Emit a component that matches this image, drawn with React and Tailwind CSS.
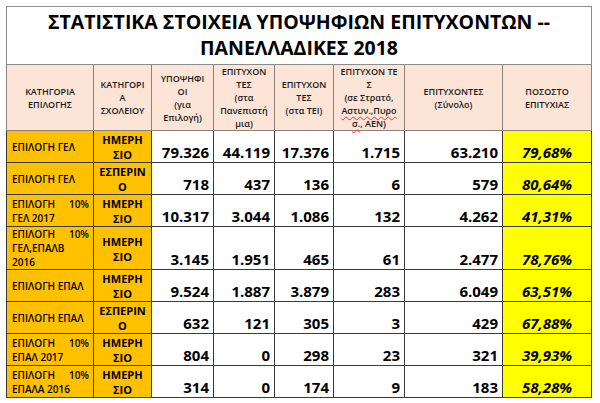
import React from "react";

const font = { fontFamily: '"Open Sans", "Noto Sans", sans-serif' };

const rows = [
  { c1: "ΕΠΙΛΟΓΗ ΓΕΛ", t: ["ΗΜΕΡΗ", "ΣΙΟ"], v: ["79.326", "44.119", "17.376", "1.715", "63.210"], p: "79,68%", h: "h-[32px]" },
  { c1: "ΕΠΙΛΟΓΗ ΓΕΛ", t: ["ΕΣΠΕΡΙΝ", "Ο"], v: ["718", "437", "136", "6", "579"], p: "80,64%", h: "h-[32px]" },
  { m: ["ΓΕΛ 2017"], t: ["ΗΜΕΡΗ", "ΣΙΟ"], v: ["10.317", "3.044", "1.086", "132", "4.262"], p: "41,31%", h: "h-[32px]" },
  { m: ["ΓΕΛ,ΕΠΑΛΒ", "2016"], t: ["ΗΜΕΡΗ", "ΣΙΟ"], v: ["3.145", "1.951", "465", "61", "2.477"], p: "78,76%", h: "h-[42px]", tall: true },
  { c1: "ΕΠΙΛΟΓΗ ΕΠΑΛ", t: ["ΗΜΕΡΗ", "ΣΙΟ"], v: ["9.524", "1.887", "3.879", "283", "6.049"], p: "63,51%", h: "h-[32px]" },
  { c1: "ΕΠΙΛΟΓΗ ΕΠΑΛ", t: ["ΕΣΠΕΡΙΝ", "Ο"], v: ["632", "121", "305", "3", "429"], p: "67,88%", h: "h-[30px]" },
  { m: ["ΕΠΑΛ 2017"], t: ["ΗΜΕΡΗ", "ΣΙΟ"], v: ["804", "0", "298", "23", "321"], p: "39,93%", h: "h-[32px]" },
  { m: ["ΕΠΑΛΑ 2016"], t: ["ΗΜΕΡΗ", "ΣΙΟ"], v: ["314", "0", "174", "9", "183"], p: "58,28%", h: "h-[31px]" },
];

const Squig = ({ children }) => (
  <span className="underline decoration-wavy decoration-red-500 decoration-1 underline-offset-2">{children}</span>
);

const headers = [
  ["ΚΑΤΗΓΟΡΙΑ", "ΕΠΙΛΟΓΗΣ"],
  ["ΚΑΤΗΓΟΡΙ", "Α", "ΣΧΟΛΕΙΟΥ"],
  ["ΥΠΟΨΗΦΙ", "ΟΙ", "(για", "Επιλογή)"],
  ["ΕΠΙΤΥΧΟΝ", "ΤΕΣ", "(στα", "Πανεπιστή", "μια)"],
  ["ΕΠΙΤΥΧΟΝ", "ΤΕΣ", "(στα ΤΕΙ)"],
  ["ΕΠΙΤΥΧΟΝ ΤΕ", "Σ", "(σε Στρατό,", <Squig key="a">Αστυν.,Πυρο</Squig>, <span key="b"><Squig>σ.</Squig>, ΑΕΝ)</span>],
  ["ΕΠΙΤΥΧΟΝΤΕΣ", "(Σύνολο)"],
  ["ΠΟΣΟΣΤΟ", "ΕΠΙΤΥΧΙΑΣ"],
];

export default function App() {
  return (
    <div className="w-[600px] h-[403px] bg-white pt-[6px] pl-[6px]" style={font}>
      <table className="border-collapse table-fixed w-[585px] text-black">
        <colgroup>
          <col className="w-[87px]" />
          <col className="w-[58px]" />
          <col className="w-[62px]" />
          <col className="w-[61px]" />
          <col className="w-[59px]" />
          <col className="w-[71px]" />
          <col className="w-[98px]" />
          <col className="w-[89px]" />
        </colgroup>
        <tbody>
          <tr className="h-[58px]">
            <td colSpan={8} className="border border-[#8c8c8c] text-center align-middle font-bold text-[19.5px] leading-[26px] pb-[2px]">
              ΣΤΑΤΙΣΤΙΚΑ ΣΤΟΙΧΕΙΑ ΥΠΟΨΗΦΙΩΝ ΕΠΙΤΥΧΟΝΤΩΝ --
              <br />
              ΠΑΝΕΛΛΑΔΙΚΕΣ 2018
            </td>
          </tr>
          <tr className="h-[66px] bg-[#fce4d6]">
            {headers.map((lines, i) => (
              <td key={i} className="border border-[#8e8278] text-center align-middle font-semibold text-[9px] leading-[13px] text-[#1a1a1a] px-[1px]">
                {lines.map((l, j) => (
                  <div key={j} className="whitespace-nowrap">{l}</div>
                ))}
              </td>
            ))}
          </tr>
          {rows.map((r, i) => (
            <tr key={i} className={r.h}>
              <td className={`border border-[#3a3a3a] bg-[#ffc000] font-semibold text-[10px] leading-[14px] pl-[5px] pr-[4px] ${r.m ? (r.tall ? "align-top pt-0" : "align-top pt-[2px]") : "align-middle"}`}>
                {r.m ? (
                  <>
                    <div className="flex justify-between">
                      <span>ΕΠΙΛΟΓΗ</span>
                      <span>10%</span>
                    </div>
                    {r.m.map((l, j) => (
                      <div key={j}>{l}</div>
                    ))}
                  </>
                ) : (
                  r.c1
                )}
              </td>
              <td className="border border-[#3a3a3a] bg-[#ffc000] text-center align-middle font-bold text-[11px] leading-[15px] pt-[1px]">
                <div>{r.t[0]}</div>
                <div>{r.t[1]}</div>
              </td>
              {r.v.map((v, j) => (
                <td key={j} className="border border-[#3a3a3a] text-right align-bottom font-bold text-[15px] leading-[18px] pr-[4px] pb-[1px]">
                  {v}
                </td>
              ))}
              <td className="border border-[#3a3a3a] bg-[#ffff00] text-center align-bottom font-bold italic text-[15px] leading-[18px] pb-[1px]">
                {r.p}
              </td>
            </tr>
          ))}
        </tbody>
      </table>
    </div>
  );
}
